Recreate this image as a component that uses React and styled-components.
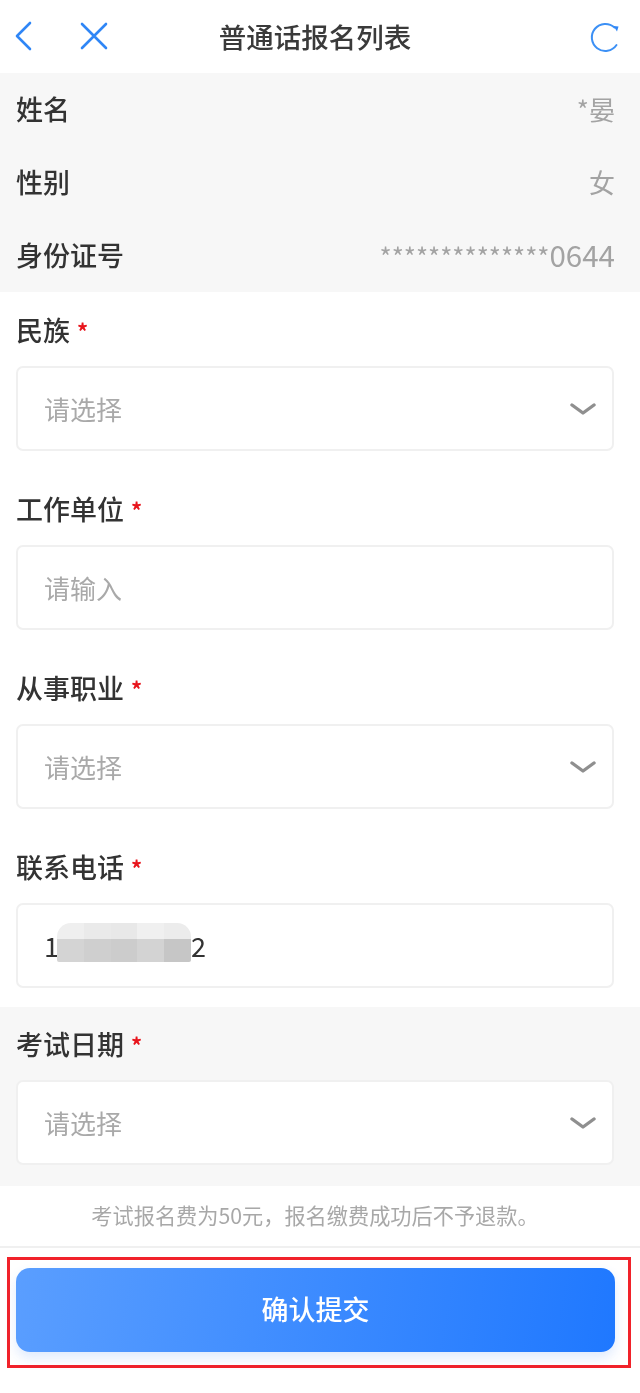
import React from "react";
import styled, { createGlobalStyle } from "styled-components";

const GlobalStyle = createGlobalStyle`
  html, body {
    margin: 0;
    padding: 0;
    background: #ffffff;
  }
  body {
    font-family: "Noto Sans CJK SC", "Noto Sans", sans-serif;
  }
`;

const mosaicTop = ["#efefef", "#eaeaea", "#e8e8e8", "#f0f0f0", "#ececec"];
const mosaicBottom = ["#d4d4d4", "#cfcfcf", "#cccccc", "#d3d3d3", "#c6c6c6"];

const Field = ({ label, children }) => (
  <FieldWrap>
    <FieldLabel>
      {label}
      <Star>*</Star>
    </FieldLabel>
    {children}
  </FieldWrap>
);

const SelectField = ({ label }) => (
  <Field label={label}>
    <InputBox>
      <Placeholder>请选择</Placeholder>
      <svg width="26" height="14" viewBox="0 0 26 14" fill="none">
        <path d="M2 3 L13 11 L24 3" stroke="#8f8f8f" strokeWidth="3.4" strokeLinecap="round" strokeLinejoin="round" />
      </svg>
    </InputBox>
  </Field>
);

const App = () => {
  return (
    <Page>
      <GlobalStyle />
      <Header>
        <NavGroup>
          <IconButton>
            <svg width="20" height="30" viewBox="0 0 20 30" fill="none">
              <path d="M16 2 L3 15 L16 28" stroke="#2f86f6" strokeWidth="2.6" strokeLinecap="round" strokeLinejoin="round" />
            </svg>
          </IconButton>
          <IconButton>
            <svg width="28" height="28" viewBox="0 0 28 28" fill="none">
              <path d="M2 2 L26 26 M26 2 L2 26" stroke="#2f86f6" strokeWidth="2.6" strokeLinecap="round" />
            </svg>
          </IconButton>
        </NavGroup>
        <Title>普通话报名列表</Title>
        <Refresh>
          <svg width="32" height="32" viewBox="0 0 32 32" fill="none">
            <path d="M25.5 6.5 A13.5 13.5 0 1 0 27.5 24" stroke="#3c90f5" strokeWidth="2" strokeLinecap="round" />
            <path d="M24.5 5 L29.5 5.5 L28 10.5 Z" fill="#2f86f6" />
          </svg>
        </Refresh>
      </Header>

      <InfoPanel>
        <InfoRow>
          <InfoLabel>姓名</InfoLabel>
          <InfoValue>*晏</InfoValue>
        </InfoRow>
        <InfoRow>
          <InfoLabel>性别</InfoLabel>
          <InfoValue>女</InfoValue>
        </InfoRow>
        <InfoRow>
          <InfoLabel>身份证号</InfoLabel>
          <InfoValue>
            **************<Digits>0644</Digits>
          </InfoValue>
        </InfoRow>
      </InfoPanel>

      <FormPanel>
        <SelectField label="民族" />
        <Field label="工作单位">
          <InputBox>
            <Placeholder>请输入</Placeholder>
          </InputBox>
        </Field>
        <SelectField label="从事职业" />
        <Field label="联系电话">
          <InputBox>
            <PhoneValue>
              <span>1</span>
              <PhoneGap />
              <span>2</span>
              <Mosaic>
                {mosaicTop.map((c, i) => (
                  <MosaicCell key={i} $color={c} />
                ))}
                {mosaicBottom.map((c, i) => (
                  <MosaicCell key={i} $color={c} />
                ))}
              </Mosaic>
            </PhoneValue>
          </InputBox>
        </Field>
      </FormPanel>

      <DatePanel>
        <SelectField label="考试日期" />
      </DatePanel>

      <Note>考试报名费为50元，报名缴费成功后不予退款。</Note>

      <Footer>
        <Highlight>
          <SubmitButton>确认提交</SubmitButton>
        </Highlight>
      </Footer>
    </Page>
  );
};

const Page = styled.div`
  width: 640px;
  height: 1393px;
  background: #ffffff;
  overflow: hidden;
  filter: blur(0.7px);
`;

const Header = styled.div`
  height: 73px;
  padding: 0 19px 2px 9px;
  box-sizing: border-box;
  display: grid;
  grid-template-columns: 1fr auto 1fr;
  align-items: center;
  background: #ffffff;
`;

const NavGroup = styled.div`
  display: flex;
  align-items: center;
  gap: 46px;
  padding-left: 5px;
`;

const IconButton = styled.span`
  display: flex;
  align-items: center;
`;

const Refresh = styled.span`
  display: flex;
  justify-content: flex-end;
  padding-top: 3px;
`;

const Title = styled.div`
  font-size: 27.5px;
  font-weight: 500;
  line-height: 40px;
  color: #3a3a3a;
`;

const InfoPanel = styled.div`
  height: 219px;
  padding: 0 25px 0 16px;
  box-sizing: border-box;
  background: #f7f7f7;
  display: flex;
  flex-direction: column;
`;

const InfoRow = styled.div`
  height: 73px;
  padding-bottom: 2px;
  box-sizing: border-box;
  display: flex;
  align-items: center;
  justify-content: space-between;
`;

const InfoLabel = styled.span`
  font-size: 27px;
  font-weight: 500;
  color: #333333;
`;

const InfoValue = styled.span`
  font-size: 26px;
  color: #a3a3a3;
  line-height: 40px;
`;

const Digits = styled.span`
  font-size: 29.5px;
`;

const FormPanel = styled.div`
  height: 715px;
  padding: 18px 26px 0 16px;
  box-sizing: border-box;
  background: #ffffff;
  display: flex;
  flex-direction: column;
  gap: 38px;
`;

const DatePanel = styled.div`
  height: 179px;
  padding: 17px 26px 0 16px;
  box-sizing: border-box;
  background: #f7f7f7;
`;

const FieldWrap = styled.div`
  display: flex;
  flex-direction: column;
  gap: 17px;
`;

const FieldLabel = styled.div`
  height: 39px;
  display: flex;
  align-items: center;
  font-size: 27px;
  font-weight: 500;
  color: #333333;
`;

const Star = styled.span`
  margin-left: 7px;
  font-size: 22px;
  font-weight: 700;
  color: #e8141c;
`;

const InputBox = styled.div`
  height: 85px;
  padding: 0 16px 0 26px;
  box-sizing: border-box;
  border: 2px solid #f0f0f0;
  border-radius: 7px;
  background: #ffffff;
  display: flex;
  align-items: center;
  justify-content: space-between;
`;

const Placeholder = styled.span`
  font-size: 26px;
  color: #a9a9a9;
`;

const PhoneValue = styled.div`
  position: relative;
  display: flex;
  align-items: center;
  font-size: 27px;
  color: #333333;
`;

const PhoneGap = styled.span`
  width: 132px;
`;

const Mosaic = styled.div`
  position: absolute;
  left: 13px;
  top: -3px;
  width: 134px;
  height: 39px;
  display: grid;
  grid-template-columns: repeat(5, 1fr);
  grid-template-rows: 16px 23px;
  border-radius: 14px 14px 2px 2px;
  overflow: hidden;
`;

const MosaicCell = styled.span`
  background: ${(p) => p.$color};
`;

const Note = styled.div`
  height: 62px;
  padding: 0 10px 4px 0;
  box-sizing: border-box;
  display: flex;
  align-items: center;
  justify-content: center;
  font-size: 21.2px;
  color: #a8a8a8;
  border-bottom: 2px solid #f0f0f0;
`;

const Footer = styled.div`
  padding: 9px 9px 0 7px;
`;

const Highlight = styled.div`
  height: 111px;
  padding: 8px 13px 0 6px;
  box-sizing: border-box;
  border: 3px solid #f1222a;
`;

const SubmitButton = styled.button`
  display: block;
  width: 100%;
  height: 84px;
  border: none;
  border-radius: 14px;
  padding: 0 0 3px;
  background: linear-gradient(100deg, #5a9eff 0%, #1f78ff 100%);
  box-shadow: 0 6px 12px rgba(60, 130, 240, 0.16);
  color: #ffffff;
  font-family: inherit;
  font-size: 27px;
  font-weight: 500;
`;

export default App;
